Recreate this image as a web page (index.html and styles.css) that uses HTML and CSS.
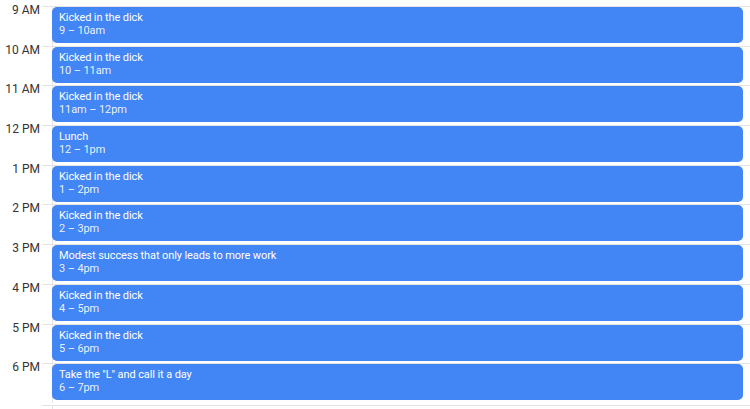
FILE: index.html
```html
<!DOCTYPE html>
<html lang="en">
<head>
  <meta charset="UTF-8">
  <meta name="viewport" content="width=device-width, initial-scale=1.0">
  <title>Day</title>
  <link rel="stylesheet" href="styles.css">
</head>
<body>
  <div class="day">
    <div class="row">
      <div class="label">9 AM</div><div class="tick"></div>
      <div class="slot"><div class="event"><div class="title">Kicked in the dick</div><div class="time">9 – 10am</div></div></div>
    </div>
    <div class="row">
      <div class="label">10 AM</div><div class="tick"></div>
      <div class="slot"><div class="event"><div class="title">Kicked in the dick</div><div class="time">10 – 11am</div></div></div>
    </div>
    <div class="row">
      <div class="label">11 AM</div><div class="tick"></div>
      <div class="slot"><div class="event"><div class="title">Kicked in the dick</div><div class="time">11am – 12pm</div></div></div>
    </div>
    <div class="row">
      <div class="label">12 PM</div><div class="tick"></div>
      <div class="slot"><div class="event"><div class="title">Lunch</div><div class="time">12 – 1pm</div></div></div>
    </div>
    <div class="row">
      <div class="label">1 PM</div><div class="tick"></div>
      <div class="slot"><div class="event"><div class="title">Kicked in the dick</div><div class="time">1 – 2pm</div></div></div>
    </div>
    <div class="row">
      <div class="label">2 PM</div><div class="tick"></div>
      <div class="slot"><div class="event"><div class="title">Kicked in the dick</div><div class="time">2 – 3pm</div></div></div>
    </div>
    <div class="row">
      <div class="label">3 PM</div><div class="tick"></div>
      <div class="slot"><div class="event"><div class="title">Modest success that only leads to more work</div><div class="time">3 – 4pm</div></div></div>
    </div>
    <div class="row">
      <div class="label">4 PM</div><div class="tick"></div>
      <div class="slot"><div class="event"><div class="title">Kicked in the dick</div><div class="time">4 – 5pm</div></div></div>
    </div>
    <div class="row">
      <div class="label">5 PM</div><div class="tick"></div>
      <div class="slot"><div class="event"><div class="title">Kicked in the dick</div><div class="time">5 – 6pm</div></div></div>
    </div>
    <div class="row">
      <div class="label">6 PM</div><div class="tick"></div>
      <div class="slot"><div class="event"><div class="title">Take the "L" and call it a day</div><div class="time">6 – 7pm</div></div></div>
    </div>
    <div class="row last">
      <div class="label"></div><div class="tick"></div>
      <div class="slot"></div>
    </div>
  </div>
</body>
</html>
```

FILE: styles.css
```css
body {
  margin: 0;
  background-color: #fff;
  font-family: Roboto, "Liberation Sans", Arial, sans-serif;
}
.day {
  padding-top: 6px;
}
.row {
  display: grid;
  grid-template-columns: 42px 10px 1fr;
  height: 39.7px;
}
.row.last {
  height: 10px;
  margin-top: 2px;
}
.label {
  font-size: 12px;
  line-height: 12px;
  color: #333;
  text-align: right;
  padding-right: 2px;
  margin-top: -2px;
}
.tick {
  border-top: 1px solid #e4e4e4;
}
.slot {
  border-top: 1px solid #e4e4e4;
  border-left: 1px solid #e4e4e4;
  padding: 0 7px 0 0;
}
.event {
  height: 36px;
  margin-left: -1px;
  box-sizing: border-box;
  padding: 4px 6px 0 7px;
  background-color: #4285f4;
  border-radius: 5px;
  color: #fff;
  font-size: 11px;
  line-height: 13px;
  letter-spacing: -0.1px;
}
.time {
  color: rgba(255, 255, 255, 0.9);
}
```
